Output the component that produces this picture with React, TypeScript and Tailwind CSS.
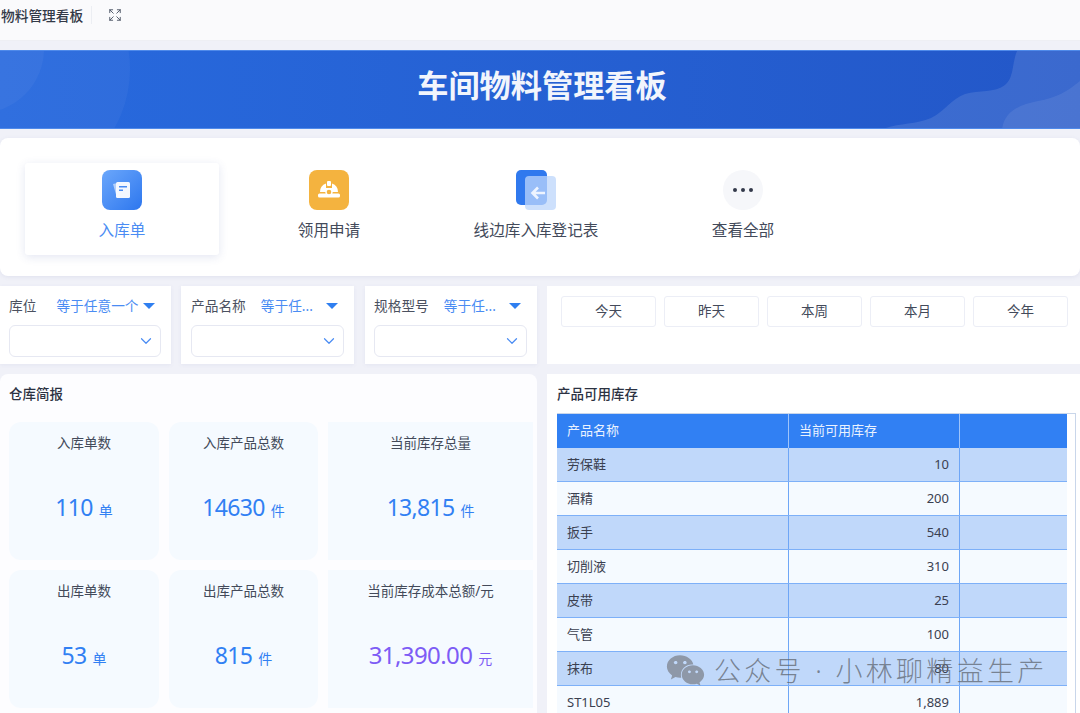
import { ChevronDown, Expand } from "lucide-react";
import { FaWeixin } from "react-icons/fa";

const font = { fontFamily: '"Noto Sans", "Noto Sans CJK SC", sans-serif' };

const rows = [
  ["劳保鞋", "10"],
  ["酒精", "200"],
  ["扳手", "540"],
  ["切削液", "310"],
  ["皮带", "25"],
  ["气管", "100"],
  ["抹布", "80"],
  ["ST1L05", "1,889"],
];

function DocIcon() {
  return (
    <div className="w-10 h-10 rounded-lg bg-gradient-to-br from-[#6ba7fb] to-[#2c76ee] flex items-center justify-center">
      <svg width="22" height="22" viewBox="0 0 22 22">
        <path d="M2 5l9-2 3 14-8 2z" fill="#ffffff" fillOpacity="0.55" />
        <rect x="5" y="3" width="14" height="16" rx="1.5" fill="#f4f8ff" />
        <rect x="8" y="7" width="8" height="1.5" fill="#4a8cf3" />
        <rect x="8" y="10.5" width="4" height="1.5" fill="#4a8cf3" />
      </svg>
    </div>
  );
}

function HelmetIcon() {
  return (
    <div className="w-10 h-10 rounded-lg bg-[#f4b33f] flex items-center justify-center">
      <svg width="24" height="20" viewBox="0 0 24 20">
        <path d="M3 12a9 9 0 0 1 6-8.500V8h6V3.500A9 9 0 0 1 21 12z" fill="#ffffff" />
        <rect x="10" y="1" width="4" height="5" rx="1" fill="#ffffff" />
        <rect x="1" y="13.500" width="22" height="4" rx="1.500" fill="#ffffff" />
        <circle cx="12" cy="12" r="3" fill="#f4b33f" stroke="#ffffff" strokeWidth="1.400" />
      </svg>
    </div>
  );
}

function BackIcon() {
  return (
    <svg width="40" height="40" viewBox="0 0 40 40">
      <rect x="0" y="0" width="31" height="35" rx="5" fill="#3079ee" />
      <rect x="9" y="6" width="31" height="34" rx="4" fill="#bcd6fb" fillOpacity="0.75" />
      <path d="M29 23h-12M22 17.500l-5.500 5.500 5.500 5.500" stroke="#eef4ff" strokeWidth="2.600" fill="none" />
    </svg>
  );
}

function MoreIcon() {
  return (
    <div className="w-10 h-10 rounded-full bg-[#f6f7fa] flex items-center justify-center gap-[4px]">
      <span className="w-[4px] h-[4px] rounded-full bg-[#33394a]" />
      <span className="w-[4px] h-[4px] rounded-full bg-[#33394a]" />
      <span className="w-[4px] h-[4px] rounded-full bg-[#33394a]" />
    </div>
  );
}

function QuickItem({ icon, label, active }: { icon: React.ReactNode; label: string; active?: boolean }) {
  return (
    <div
      className={
        active
          ? "w-[194px] h-[92px] rounded-[3px] bg-white shadow-[0_2px_10px_rgba(60,80,160,0.14)] flex flex-col items-center pt-[7px]"
          : "w-[194px] h-[92px] flex flex-col items-center pt-[7px]"
      }
    >
      {icon}
      <span className={active ? "mt-[9px] text-[15.6px] leading-[22px] text-[#4a8cf3]" : "mt-[9px] text-[15.6px] leading-[22px] text-[#434a5a]"}>
        {label}
      </span>
    </div>
  );
}

function FilterBox({ label, op, width, pad, gap }: { label: string; op: string; width: string; pad: string; gap: string }) {
  return (
    <div className={`${width} ${pad} h-full bg-white pr-[10px] pt-[10px] shadow-[0_1px_4px_rgba(90,100,160,0.08)]`}>
      <div className="flex items-center h-5 text-[13.7px]">
        <span className="text-[#4b5160]">{label}</span>
        <span className={`${gap} text-[#4a8cf3]`}>{op}</span>
        <span className="ml-auto mr-[6px] w-0 h-0 border-x-[6px] border-x-transparent border-t-[6px] border-t-[#2f7ff0]" />
      </div>
      <div className="mt-[9px] h-8 rounded-md border border-[#e6e8f2] bg-white flex items-center justify-end pr-[5px]">
        <ChevronDown size={18} strokeWidth={1.6} className="text-[#4a8cf3]" />
      </div>
    </div>
  );
}

function Stat({
  title,
  value,
  unit,
  square,
  purple,
}: {
  title: string;
  value: string;
  unit: string;
  square?: boolean;
  purple?: boolean;
}) {
  return (
    <div className={square ? "h-[138px] bg-[#f5faff] flex flex-col items-center" : "h-[138px] bg-[#f5faff] rounded-xl flex flex-col items-center"}>
      <div className="mt-[11px] text-[13.5px] leading-5 text-[#434a5a]">{title}</div>
      <div className={purple ? "mt-[34px] flex items-baseline gap-[6px] text-[#7d5cf5]" : "mt-[34px] flex items-baseline gap-[6px] text-[#3180f3]"}>
        <span className={purple ? "text-[24px] leading-[40px] tracking-[-0.6px]" : "text-[23px] leading-[40px] tracking-[-0.7px]"}>{value}</span>
        <span className="text-[14px]">{unit}</span>
      </div>
    </div>
  );
}

export default function App() {
  return (
    <div style={font} className="relative w-[1080px] h-[713px] overflow-hidden bg-[#f0f1f8] flex flex-col">
      <div className="h-[41px] shrink-0 bg-[#fafafc] border-b border-[#eeeff4] flex items-start pl-[1px] pt-[6px]">
        <span className="text-[13.7px] leading-5 font-medium text-[#333947]">物料管理看板</span>
        <span className="ml-2 w-px h-[18px] bg-[#eceef3]" />
        <Expand size={14} strokeWidth={1.6} className="ml-[16px] mt-[2px] text-[#4c5566]" />
      </div>

      <div className="relative mt-[9px] h-[79px] shrink-0 overflow-hidden border-y border-[#4f8aea] bg-gradient-to-r from-[#286ade] to-[#2357c8] flex items-center justify-center">
        <svg className="absolute left-0 top-0" width="1080" height="79" viewBox="0 0 1080 79">
          <circle cx="10" cy="18" r="120" fill="#ffffff" fillOpacity="0.04" />
          <circle cx="-20" cy="-2" r="64" fill="#ffffff" fillOpacity="0.04" />
          <path
            d="M881 79c14-7 34-5 50-12 14-7 20-19 34-24 14-4 30-1 40-9 9-7 7-22 12-34h63v79z"
            fill="#ffffff"
            fillOpacity="0.11"
          />
          <path d="M1002 79c2-18 16-25 36-29 18-3 30-10 42-20v49z" fill="#ffffff" fillOpacity="0.08" />
        </svg>
        <h1 className="relative -mt-2 ml-1 text-[31.2px] font-bold text-[#f2f5fc] leading-none">车间物料管理看板</h1>
      </div>

      <div className="mt-[9px] h-[138px] shrink-0 rounded-lg bg-white shadow-[0_1px_4px_rgba(90,100,160,0.1)] flex gap-[13px] pl-[25px] pt-[25px]">
        <QuickItem icon={<DocIcon />} label="入库单" active />
        <QuickItem icon={<HelmetIcon />} label="领用申请" />
        <QuickItem icon={<BackIcon />} label="线边库入库登记表" />
        <QuickItem icon={<MoreIcon />} label="查看全部" />
      </div>

      <div className="mt-[10px] h-[78px] shrink-0 flex">
        <div className="w-[537px] h-full flex">
          <FilterBox label="库位" op="等于任意一个" width="w-[171px]" pad="pl-[9px]" gap="ml-[20px]" />
          <div className="w-[10px]" />
          <FilterBox label="产品名称" op="等于任..." width="w-[173px]" pad="pl-[10px]" gap="ml-[15px]" />
          <div className="w-[11px]" />
          <FilterBox label="规格型号" op="等于任..." width="w-[172px]" pad="pl-[9px]" gap="ml-[15px]" />
        </div>
        <div className="ml-[10px] flex-1 bg-white pl-[14px] pr-[12px] pt-[10px] flex gap-2 items-start">
          {["今天", "昨天", "本周", "本月", "今年"].map((d) => (
            <div
              key={d}
              className="flex-1 h-[31px] rounded-[3px] border border-[#eceef6] text-[13.5px] text-[#434a5a] flex items-center justify-center"
            >
              {d}
            </div>
          ))}
        </div>
      </div>

      <div className="mt-[10px] flex-1 flex min-h-0">
        <div className="w-[537px] rounded-t-lg bg-[#fdfdff] pl-[9px] pr-1">
          <div className="mt-[10px] text-[13.5px] leading-5 font-medium text-[#2c3242]">仓库简报</div>
          <div className="mt-[18px] grid grid-cols-[150px_149px_205px] gap-x-[10px] gap-y-[10px]">
            <Stat title="入库单数" value="110" unit="单" />
            <Stat title="入库产品总数" value="14630" unit="件" />
            <Stat title="当前库存总量" value="13,815" unit="件" square />
            <Stat title="出库单数" value="53" unit="单" />
            <Stat title="出库产品总数" value="815" unit="件" />
            <Stat title="当前库存成本总额/元" value="31,390.00" unit="元" square purple />
          </div>
        </div>

        <div className="ml-[10px] flex-1 bg-white pl-[10px] pr-[4px]">
          <div className="mt-[10px] text-[13.5px] leading-5 font-medium text-[#2c3242]">产品可用库存</div>
          <div className="mt-[9px] border-t border-r border-[#c9d6ea] pr-[8px]">
            <div className="h-[34px] flex bg-[#3180f3] text-[13px] text-[#eaf2ff]">
              <div className="w-[232px] pl-[10px] flex items-center border-r border-[#9fc4fa]">产品名称</div>
              <div className="w-[171px] pl-[10px] flex items-center border-r border-[#9fc4fa]">当前可用库存</div>
              <div className="flex-1" />
            </div>
            {rows.map(([name, qty], i) => (
              <div
                key={name}
                className={
                  i % 2 === 0
                    ? "h-[34px] flex bg-[#c0d8fa] text-[13px] text-[#3a4050] border-b border-[#7db0f8]"
                    : "h-[34px] flex bg-[#f5faff] text-[13px] text-[#3a4050] border-b border-[#7db0f8]"
                }
              >
                <div className="w-[232px] pl-[10px] flex items-center border-r border-[#6ea6f6]">{name}</div>
                <div className="w-[171px] pr-[10px] flex items-center justify-end border-r border-[#6ea6f6]">{qty}</div>
                <div className="flex-1" />
              </div>
            ))}
          </div>
        </div>
      </div>

      <div className="absolute left-[666px] top-[651px] flex items-center gap-[9px] text-[#5f6670]/75">
        <FaWeixin size={39} className="text-[#8e98a8]" />
        <span className="text-[27px] leading-none tracking-[3.3px] font-light whitespace-nowrap">公众号 · 小林聊精益生产</span>
      </div>
    </div>
  );
}
